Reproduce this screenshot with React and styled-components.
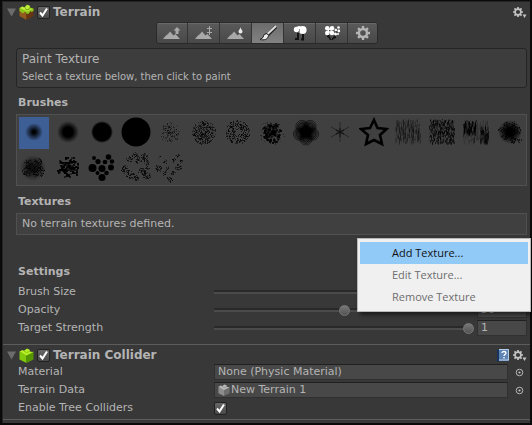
import React, { useState } from "react";
import styled, { createGlobalStyle, css } from "styled-components";

const GlobalStyle = createGlobalStyle`
  * { box-sizing: border-box; }
  body {
    margin: 0;
    background: #383838;
    color: #b4b4b4;
    font: 11px/18px "DejaVu Sans", Verdana, sans-serif;
  }
  button, input { font: inherit; color: inherit; margin: 0; padding: 0; }
  button { background: none; border: 0; }
  svg { display: block; }
`;

const Inspector = styled.main`
  position: relative;
  min-height: 100vh;
  background: #383838;
  border: solid #0a0a0a;
  border-width: 1px 2px 2px;
  box-shadow: inset 1px 1px 0 #242424;
`;

const Component = styled.section`
  padding: ${(p) => (p.$compact ? "2px 3px 2px 4px" : "3px 3px 7px 4px")};
  border-bottom: 1px solid #5c5c5c;
  margin-left: 1px;
`;

const Header = styled.header`
  display: flex;
  align-items: center;
  height: 16px;
  gap: 3px;
`;

const Title = styled.h2`
  flex: 1;
  margin: 0;
  font-size: 12px;
  line-height: 16px;
  font-weight: bold;
`;

const Heading = styled.h3`
  margin: 0 0 2px 11px;
  padding-top: ${(p) => p.$space || 6}px;
  font-size: 11px;
  line-height: 18px;
  font-weight: bold;
`;

const IconButton = styled.button`
  display: grid;
  place-items: center;
  width: ${(p) => p.$w || 14}px;
  height: 16px;
`;

const Check = styled.input`
  appearance: none;
  width: 13px;
  height: 13px;
  border: 1px solid #222;
  border-radius: 2px;
  background: linear-gradient(#686868, #494949);
  &:checked {
    background: url("data:image/svg+xml,%3Csvg xmlns='http://www.w3.org/2000/svg' viewBox='0 0 11 11'%3E%3Cpath d='M2 5.5 4.5 8.5 9 1.5' fill='none' stroke='white' stroke-width='2'/%3E%3C/svg%3E"),
      linear-gradient(#686868, #494949);
  }
`;

const Toolbar = styled.div`
  display: flex;
  width: max-content;
  margin: 2px auto 4px;
  border: 1px solid #2a2a2a;
  border-radius: 3px;
  overflow: hidden;
`;

const Tool = styled.button`
  display: grid;
  place-items: center;
  width: ${(p) => (p.$end ? 30 : 32)}px;
  height: 20px;
  background: linear-gradient(#5a5a5a, #484848);
  box-shadow: inset 0 1px 0 #686868;
  & + & { border-left: 1px solid #333; }
  ${(p) => p.$on && css`
    background: linear-gradient(#6c6c6c, #828282);
    box-shadow: none;
  `}
`;

const Box = styled.div`
  margin-left: 9px;
  border: 1px solid ${(p) => (p.$help ? "#252525" : "#505050")};
  border-radius: ${(p) => (p.$help ? 3 : 0)}px;
  background: ${(p) => (p.$help ? "#3d3d3d" : "#404040")};
`;

const HelpBox = styled(Box)`
  padding: 1px 5px;
`;

const HelpTitle = styled.div`
  font-size: 12px;
  line-height: 18px;
`;

const Small = styled.div`
  font-size: 10px;
  line-height: 18px;
`;

const BrushGrid = styled(Box)`
  display: flex;
  flex-wrap: wrap;
  gap: 2px 4px;
  padding: 2px 0 2px 2px;
`;

const BrushButton = styled.button`
  width: 30px;
  height: 32px;
  background: ${(p) => (p.$on ? "#3e5f96" : "transparent")};
`;

const EmptyBox = styled(Box)`
  padding: 1px 5px;
`;

const Row = styled.div`
  display: grid;
  grid-template-columns: 196px minmax(0, 1fr);
  align-items: center;
  height: 18px;
  margin-left: 11px;
`;

const Control = styled.div`
  display: flex;
  align-items: center;
  gap: 3px;
`;

const Slider = styled.input`
  appearance: none;
  flex: 1;
  min-width: 0;
  height: 12px;
  background: linear-gradient(#292929 0 2px, #4b4b4b 2px 5px) center / 100% 4px no-repeat;
  &::-webkit-slider-thumb {
    appearance: none;
    width: 11px;
    height: 11px;
    border: 1px solid #777;
    border-radius: 50%;
    background: linear-gradient(#777, #535353);
  }
`;

const Field = styled.div`
  display: flex;
  align-items: center;
  gap: 1px;
  flex: ${(p) => (p.$narrow ? "0 0 50px" : "1")};
  min-width: 0;
  height: 16px;
  padding-left: 3px;
  border: 1px solid #303030;
  border-top-color: #202020;
  background: #484848;
`;

const FieldInput = styled.input`
  flex: 1;
  min-width: 0;
  height: 14px;
  border: 0;
  background: transparent;
  outline: 0;
`;

const Menu = styled.div`
  position: absolute;
  top: 237px;
  right: -1px;
  width: 174px;
  padding: 3px 2px;
  border: 1px solid #b8b8b8;
  background: #f0f0f0;
  box-shadow: 3px 3px 4px rgba(0, 0, 0, 0.5);
`;

const MenuItem = styled.button`
  display: block;
  width: 100%;
  height: 22px;
  padding-left: 32px;
  text-align: left;
  font: 11px/22px "Open Sans", "Noto Sans", sans-serif;
  color: #111;
  background: ${(p) => (p.$on ? "#91c9f7" : "transparent")};
  &:disabled { color: #6d6d6d; }
`;

const Fold = ({ name }) => (
  <IconButton $w={9} aria-label={`Collapse ${name}`}>
    <svg width="9" height="9"><path d="M0 0.500h9L4.500 8.500z" fill="#6c6c6c" /></svg>
  </IconButton>
);

const cog = (cx, cy, r) =>
  Array.from({ length: 8 }, (_, i) => {
    const a = (i * Math.PI) / 4;
    return `M${cx + Math.cos(a) * r * 0.6} ${cy + Math.sin(a) * r * 0.6}L${cx + Math.cos(a) * r} ${cy + Math.sin(a) * r}`;
  }).join("");

const GearMenu = () => (
  <IconButton aria-label="Component options">
    <svg width="14" height="13" stroke="#c4c4c4" fill="none">
      <circle cx="5" cy="6" r="2.900" strokeWidth="1.600" />
      <path d={cog(5, 6, 5)} strokeWidth="1.700" />
      <path d="M9.500 8.500h4L11.500 12z" fill="#c4c4c4" stroke="none" />
    </svg>
  </IconButton>
);

const TerrainCube = () => (
  <svg width="15" height="16" viewBox="0 0 15 16">
    <path d="M0.500 4 7.500 8v8L0.500 12z" fill="#94591d" />
    <path d="M14.500 4 7.500 8v8l7-4z" fill="#673510" />
    <path d="M0.500 4 3.500 2.500 5 3.500 8 0.500 11 2v1.500l3.500 1V7l-2 1-1-1-2 3-2-.500L6 7.500 4 9.500.500 7z" fill="#8ac51b" />
    <path d="m1 4 2.500-1.500L6 4l2-3 3 1-1 2 3.500 1L8 7.500z" fill="#c1ed3c" />
    <path d="M6 4.500 8 6l3-1.500" stroke="#689c10" fill="none" />
  </svg>
);

const ColliderCube = ({ gray, size = 15 }) => {
  const c = gray ? ["#bcbcbc", "#8c8c8c", "#6e6e6e"] : ["#b7ef27", "#82c90c", "#559500"];
  return (
    <svg width={size} height={size} viewBox="0 0 15 15">
      <path d="M0.500 3.500 7.500 7v8L.500 11.500z" fill={c[1]} />
      <path d="M14.500 3.500 7.500 7v8l7-3.500z" fill={c[2]} />
      <path d="m.500 3.500 3-1.500L5 2.800 8 .500 11 2l-.500 1.500 4 .500-7 3.500z" fill={c[0]} />
      <path d="m5 3 2.500 1.500 3-1" fill="none" stroke={c[1]} />
    </svg>
  );
};

const HelpBook = () => (
  <IconButton aria-label="Help">
    <svg width="12" height="13">
      <path d="M0 1 2 0v12l-2 1z" fill="#19345c" />
      <path d="M2 0h10v12H2z" fill="#5e84b4" />
      <path d="M2 .500h9.500V11H2" fill="none" stroke="#b4cde8" />
      <path d="M5 4c0-2 4-2 4 0 0 1.500-2 1.200-2 3M7 8v1.500" fill="none" stroke="#fff" strokeWidth="1.300" />
    </svg>
  </IconButton>
);

const Picker = ({ label }) => (
  <IconButton $w={16} aria-label={label}>
    <svg width="9" height="9">
      <circle cx="4.500" cy="4.500" r="3.300" fill="none" stroke="#b4b4b4" />
      <circle cx="4.500" cy="4.500" r="1.100" fill="#c4c4c4" />
    </svg>
  </IconButton>
);

const Mountain = () => <path d="M0 14 3 10.500 5 9l2-2.500 3.500 4 2-1.500L17 14z" fill="#a9a9a9" />;
const tools = [
  ["Raise / Lower Terrain", <><Mountain /><path d="M12.500 9V5.500H10.500L14 2l3.500 3.500h-2V9z" fill="#a9a9a9" /></>],
  ["Paint Height", <><Mountain /><path d="M14.500 1v9M12 3.500h5M12 7.500h5" stroke="#a9a9a9" /></>],
  ["Smooth Height", <><Mountain /><path d="M13.500 2c0 2-2 3-2 4.500a2 2 0 0 0 4 0c0-1.500-2-2.500-2-4.500" fill="#e9e9e9" /></>],
  ["Paint Texture", <>
    <path d="M17 1.500 8.500 10" stroke="#222" strokeWidth="3.500" />
    <path d="M17 1 8.500 9" stroke="#ddd" strokeWidth="2" />
    <path d="M8 8.500 5 9.500 4 12.500 1 14.500c4 1 8 0 8.500-4z" fill="#eee" stroke="#222" />
  </>],
  ["Place Trees", <>
    <path d="M7 8v5.500m5-5V14M4 14h4M10 14.500h3" stroke="#111" strokeWidth="2" />
    <circle cx="5.500" cy="4.500" r="2.700" fill="#fff" />
    <circle cx="8" cy="3.500" r="2.500" fill="#fff" />
    <circle cx="11.700" cy="5" r="3.900" fill="#fff" />
    <path d="M8.500 4v4" stroke="#999" />
  </>],
  ["Paint Details", <>
    <path d="M5 9.500c1 3 2 3 2.500 5.500M12 10c0 2-2 3-3 5M4 11l3 2m4 0 2-1" stroke="#111" strokeWidth="1.500" fill="none" />
    <g fill="#fff">
      <circle cx="4.300" cy="3.300" r="2.300" /><circle cx="9" cy="3.300" r="2.300" /><circle cx="4.300" cy="8" r="2.300" /><circle cx="9" cy="8" r="2.300" />
      <circle cx="6.700" cy="5.700" r="2" />
      <circle cx="15.500" cy="2.500" r="1.300" /><circle cx="12.800" cy="5" r="1.300" /><circle cx="15.800" cy="6" r="1.400" /><circle cx="12.500" cy="9" r="1.500" /><circle cx="15" cy="9" r="1" />
    </g>
    <path d="M6 5.700h1.500M13.500 7h1" stroke="#222" />
  </>],
  ["Terrain Settings", <g stroke="#b5b5b5" fill="none"><circle cx="9" cy="8" r="4" strokeWidth="2.400" /><path d={cog(9, 8, 7)} strokeWidth="2.400" /></g>],
];

// Repeatable noise so every brush thumbnail keeps the same grain.
function noise(seed) {
  let s = seed * 7919;
  return () => {
    s = (s + 0x6d2b79f5) | 0;
    let t = Math.imul(s ^ (s >>> 15), 1 | s);
    t = (t + Math.imul(t ^ (t >>> 7), 61 | t)) ^ t;
    return ((t ^ (t >>> 14)) >>> 0) / 4294967296;
  };
}

function Specks({ seed, n, r, size = 1, ring = 0, opacity = 0.7, power = 0.65 }) {
  const rnd = noise(seed);
  return Array.from({ length: n }, (_, i) => {
    const a = rnd() * Math.PI * 2;
    const d = ring + Math.pow(rnd(), power) * (r - ring);
    return <rect key={i} x={Math.round(14.5 + Math.cos(a) * d)} y={Math.round(15 + Math.sin(a) * d)} width={size} height={size} fillOpacity={opacity * (0.4 + rnd() * 0.6)} />;
  });
}

function Strokes({ seed, n, max, opacity, x0 = 2, x1 = 27, y0 = 2, y1 = 28 }) {
  const rnd = noise(seed);
  return Array.from({ length: n }, (_, i) => {
    const x = Math.round(x0 + rnd() * (x1 - x0));
    const h = 1 + rnd() * max;
    const y = Math.round(y0 + rnd() * (y1 - y0 - h));
    return <rect key={i} x={x} y={y} width="1" height={h} fillOpacity={opacity * rnd()} />;
  });
}

function Blobs({ list }) {
  return list.map(([x, y, r], i) => <circle key={i} cx={x} cy={y} r={r} />);
}

function Clusters({ seed, list }) {
  const rnd = noise(seed);
  return list.flatMap(([x, y, r], j) =>
    Array.from({ length: Math.round(r * r * 2.8) }, (_, i) => {
      const a = rnd() * 6.28;
      const d = Math.sqrt(rnd()) * r;
      return <rect key={`${j}-${i}`} x={Math.round(x + Math.cos(a) * d)} y={Math.round(y + Math.sin(a) * d)} width="1" height="1" fillOpacity={0.25 + rnd() * 0.5} />;
    })
  );
}

const Soft = ({ id, r, core, x = 15, y = 15, o = 1 }) => (
  <g opacity={o}>
    <radialGradient id={id}>
      <stop offset={core} stopColor="#000" />
      <stop offset={(1 + core) / 2} stopColor="#000" stopOpacity="0.5" />
      <stop offset="1" stopColor="#000" stopOpacity="0" />
    </radialGradient>
    <circle cx={x} cy={y} r={r} fill={`url(#${id})`} />
  </g>
);

const brushes = [
  <Soft id="soft-a" r={9} core={0.15} />,
  <Soft id="soft-b" r={11} core={0.45} />,
  <Soft id="soft-c" r={11} core={0.8} />,
  <circle cx="15" cy="15" r="14.500" />,
  <Specks seed={5} n={150} r={10} opacity={0.55} power={0.8} />,
  <Specks seed={6} n={380} r={12} opacity={0.7} />,
  <Specks seed={7} n={290} r={12} ring={2} power={0.6} opacity={0.8} />,
  <><Specks seed={8} n={150} r={10} size={2} opacity={0.8} /><Specks seed={18} n={60} r={13} opacity={0.5} /></>,
  <>
    <Soft id="soft-d" r={12} core={0.4} />
    <g fill="none" stroke="#000" strokeOpacity="0.75" strokeWidth="0.700">
      {[0, 1, 2, 3, 4].map((i) => {
        const a = (i * 72 + 90) * Math.PI / 180;
        const x = 15 + Math.cos(a) * 7;
        const y = 15 + Math.sin(a) * 7;
        return <g key={i}><circle cx={x} cy={y} r="6" /><circle cx={x} cy={y} r="4.500" /><circle cx={x} cy={y} r="3" /></g>;
      })}
    </g>
  </>,
  <g stroke="#000" strokeOpacity="0.450"><path d="M15 5v20M6 10l18 10M24 10 6 20" strokeWidth="0.900" /><path d="M15 11v9M11 13l8 4M19 13l-8 4" strokeWidth="1.500" /></g>,
  <path d="m15 3 3.500 8 9 1-6.500 6 2 9-8-4-8 4 2-9-7-6 9-1z" fill="none" stroke="#000" strokeWidth="2.600" />,
  <Strokes seed={12} n={330} max={6} opacity={0.27} />,
  <Strokes seed={13} n={620} max={2} opacity={0.6} />,
  <>
    <Strokes seed={14} n={180} max={7} opacity={0.25} />
    <Strokes seed={24} n={150} max={6} opacity={0.6} x0={2} x1={15} y0={3} y1={19} />
    <Strokes seed={34} n={100} max={6} opacity={0.5} x0={19} x1={27} y0={9} y1={28} />
  </>,
  <><Soft id="soft-e" r={12} core={0.35} /><Clusters seed={15} list={[[11, 7, 3], [19, 7, 3], [6, 12, 3], [22, 13, 4], [9, 20, 3], [18, 22, 4], [24, 23, 2]]} /></>,
  <><Soft id="soft-f" r={13} core={0.25} o={0.75} x={14} y={17} /><Clusters seed={16} list={[[9, 12, 4], [19, 10, 4], [8, 20, 5], [19, 20, 6]]} /></>,
  <><Specks seed={17} n={100} r={10} size={2} opacity={1} /><Specks seed={27} n={30} r={12} size={2} opacity={0.9} /></>,
  <Blobs list={[[7, 7, 2], [21.5, 6, 2.8], [11, 10.5, 2.6], [18, 11, 2.3], [25, 10.5, 2.2], [5.500, 17, 4], [15, 17.500, 3.5], [24, 16.500, 3], [10.500, 22, 2], [19.500, 22, 2.3], [15, 26.500, 3.5]]} />,
  <Clusters seed={19} list={[[14, 4, 3], [23, 5, 3.5], [8, 8, 3], [17, 9, 3], [25, 11, 3], [4, 18, 4], [9, 24, 4], [15, 27, 3], [21, 20, 4], [25, 24, 4], [26, 17, 2]]} />,
  <Clusters seed={20} list={[[22, 4, 2], [4, 6, 1.5], [10, 10, 2], [19, 9, 2], [26, 10, 2], [3, 17, 3.5], [12, 17, 2], [23, 16, 3], [9, 22, 2], [18, 22, 2.5], [14, 28, 3]]} />,
];

function SliderRow({ name, initial, max }) {
  const [value, setValue] = useState(initial);
  const id = name.replace(/ /g, "-").toLowerCase();
  const change = (e) => setValue(e.target.value);
  return (
    <Row>
      <label htmlFor={id}>{name}</label>
      <Control>
        <Slider id={id} type="range" min="0" max={max} step="any" value={value} onChange={change} />
        <Field $narrow><FieldInput aria-label={`${name} value`} value={value} onChange={change} /></Field>
      </Control>
    </Row>
  );
}

export default function App() {
  const [tool, setTool] = useState(3);
  const [brush, setBrush] = useState(0);
  return (
    <>
      <GlobalStyle />
      <Inspector>
        <Component>
          <Header>
            <Fold name="Terrain" />
            <TerrainCube />
            <Check type="checkbox" defaultChecked aria-label="Enable Terrain" />
            <Title>Terrain</Title>
            <GearMenu />
          </Header>
          <Toolbar role="toolbar">
            {tools.map(([label, art], i) => (
              <Tool key={label} aria-label={label} aria-pressed={tool === i} $on={tool === i} $end={i === 0 || i === 6} onClick={() => setTool(i)}>
                <svg width="18" height="16">{art}</svg>
              </Tool>
            ))}
          </Toolbar>
          <HelpBox $help>
            <HelpTitle>Paint Texture</HelpTitle>
            <Small>Select a texture below, then click to paint</Small>
          </HelpBox>
          <Heading>Brushes</Heading>
          <BrushGrid>
            {brushes.map((art, i) => (
              <BrushButton key={i} aria-label={`Brush ${i + 1}`} $on={brush === i} onClick={() => setBrush(i)}>
                <svg width="30" height="32">{art}</svg>
              </BrushButton>
            ))}
          </BrushGrid>
          <Heading $space={7}>Textures</Heading>
          <EmptyBox>No terrain textures defined.</EmptyBox>
          <Heading $space={28}>Settings</Heading>
          <SliderRow name="Brush Size" initial={100} max={100} />
          <SliderRow name="Opacity" initial={50} max={100} />
          <SliderRow name="Target Strength" initial={1} max={1} />
        </Component>
        <Component $compact>
          <Header>
            <Fold name="Terrain Collider" />
            <ColliderCube />
            <Check type="checkbox" defaultChecked aria-label="Enable Terrain Collider" />
            <Title>Terrain Collider</Title>
            <HelpBook />
            <GearMenu />
          </Header>
          <Row>
            <label htmlFor="material">Material</label>
            <Control>
              <Field><FieldInput id="material" readOnly value="None (Physic Material)" /></Field>
              <Picker label="Select material" />
            </Control>
          </Row>
          <Row>
            <label htmlFor="terrain-data">Terrain Data</label>
            <Control>
              <Field><ColliderCube gray size={12} /><FieldInput id="terrain-data" readOnly value="New Terrain 1" /></Field>
              <Picker label="Select terrain data" />
            </Control>
          </Row>
          <Row>
            <label htmlFor="tree-colliders">Enable Tree Colliders</label>
            <Check id="tree-colliders" type="checkbox" defaultChecked />
          </Row>
        </Component>
        <Menu role="menu">
          <MenuItem role="menuitem" $on>Add Texture...</MenuItem>
          <MenuItem role="menuitem" disabled>Edit Texture...</MenuItem>
          <MenuItem role="menuitem" disabled>Remove Texture</MenuItem>
        </Menu>
      </Inspector>
    </>
  );
}
